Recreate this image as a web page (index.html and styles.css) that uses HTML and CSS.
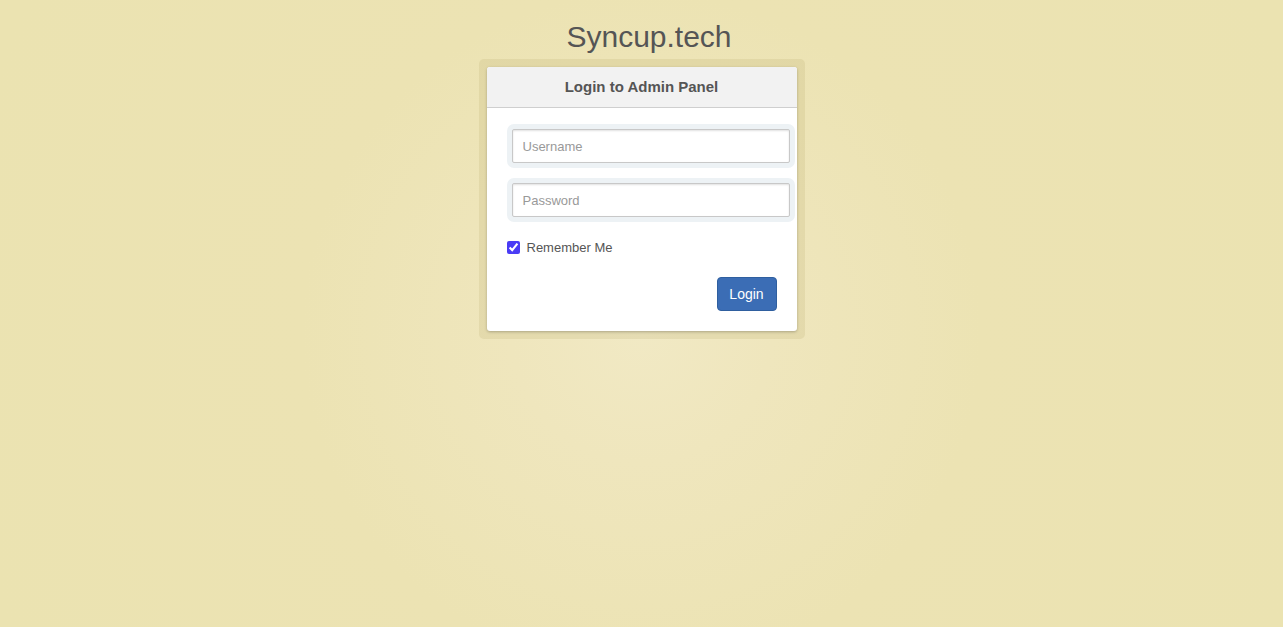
FILE: index.html
```html
<!DOCTYPE html>
<html lang="en">
<head>
<meta charset="utf-8">
<title>Syncup.tech</title>
<link rel="stylesheet" href="styles.css">
</head>
<body>
<div class="page">
  <h1 class="brand">Syncup.tech</h1>
  <div class="frame">
    <div class="panel">
      <div class="panel-head">Login to Admin Panel</div>
      <form class="panel-body">
        <div class="field"><input type="text" class="input" placeholder="Username"></div>
        <div class="field"><input type="password" class="input" placeholder="Password"></div>
        <label class="check"><input type="checkbox" checked class="checkbox"> Remember Me</label>
        <div class="actions"><button type="button" class="btn">Login</button></div>
      </form>
    </div>
  </div>
</div>
</body>
</html>
```

FILE: styles.css
```css
html, body {
  margin: 0;
  height: 100%;
}
body {
  font-family: "Liberation Sans", Arial, sans-serif;
  color: #555;
  background: radial-gradient(circle at 50% 53%, #f1e9c4 0px, #efe6bd 130px, #ece3b3 340px, #ebe3b1 700px);
}
.page {
  display: flex;
  flex-direction: column;
  align-items: center;
  padding-top: 19px;
}
.brand {
  margin: 0 0 4px 15px;
  font-size: 30px;
  font-weight: normal;
  line-height: 36px;
  color: #555;
}
.frame {
  width: 310px;
  padding: 8px;
  background: rgba(150, 130, 60, 0.12);
  border-radius: 5px;
}
.panel {
  background: #fff;
  border-radius: 3px;
  box-shadow: 0 1px 3px rgba(0, 0, 0, 0.25);
}
.panel-head {
  box-sizing: border-box;
  height: 41px;
  line-height: 40px;
  text-align: center;
  font-weight: bold;
  font-size: 15px;
  background: #f2f2f2;
  border-bottom: 1px solid #cfcfcf;
  border-radius: 3px 3px 0 0;
  color: #555;
}
.panel-body {
  display: flex;
  flex-direction: column;
  padding: 16px 20px 20px 20px;
}
.field {
  margin-right: -18px;
  padding: 5px;
  background: #edf2f5;
  border-radius: 7px;
  margin-bottom: 10px;
}
.input {
  display: block;
  box-sizing: border-box;
  width: 100%;
  height: 34px;
  padding: 6px 10px;
  border: 1px solid #c8c8c8;
  border-radius: 2px;
  box-shadow: inset 0 1px 2px rgba(0, 0, 0, 0.12);
  font-family: "Liberation Sans", Arial, sans-serif;
  font-size: 13px;
  color: #555;
  background: #fff;
  outline: none;
}
.input::placeholder {
  color: #999;
}
.check {
  display: flex;
  align-items: center;
  height: 20px;
  margin-top: 5px;
  font-size: 13px;
  color: #555;
}
.checkbox {
  width: 13px;
  height: 13px;
  margin: 0 7px 0 0;
  accent-color: #4a3cf5;
}
.actions {
  display: flex;
  justify-content: flex-end;
  margin-top: 20px;
}
.btn {
  width: 60px;
  height: 34px;
  background: #3b6db5;
  border: 1px solid #2f5f9f;
  border-radius: 4px;
  color: #fff;
  font-family: "Liberation Sans", Arial, sans-serif;
  font-size: 14px;
  padding: 0;
}
```
